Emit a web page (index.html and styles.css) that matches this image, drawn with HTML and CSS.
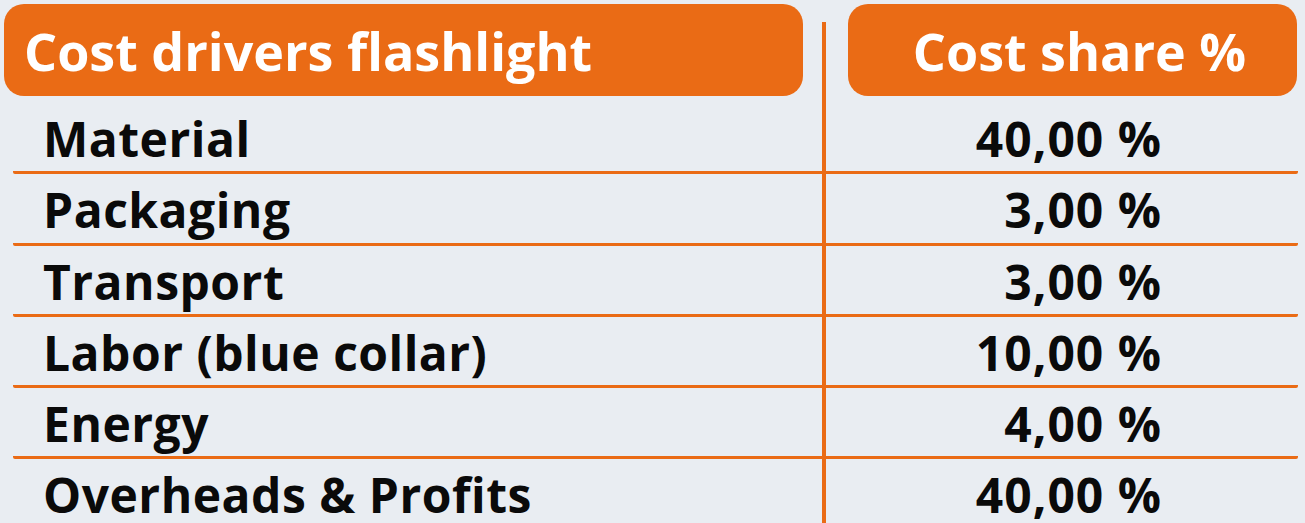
FILE: index.html
```html
<!DOCTYPE html>
<html lang="en">
<head>
<meta charset="utf-8">
<title>Cost drivers flashlight</title>
<link rel="stylesheet" href="styles.css">
</head>
<body>
<div class="table">
  <div class="head">
    <div class="pill pill-left">Cost drivers flashlight</div>
    <div class="divider divider-head"></div>
    <div class="pill pill-right">Cost share %</div>
  </div>
  <div class="rows">
    <div class="row"><div class="label">Material</div><div class="divider"></div><div class="value">40,00 %</div></div>
    <div class="row"><div class="label">Packaging</div><div class="divider"></div><div class="value">3,00 %</div></div>
    <div class="row"><div class="label">Transport</div><div class="divider"></div><div class="value">3,00 %</div></div>
    <div class="row"><div class="label">Labor (blue collar)</div><div class="divider"></div><div class="value">10,00 %</div></div>
    <div class="row"><div class="label">Energy</div><div class="divider"></div><div class="value">4,00 %</div></div>
    <div class="row"><div class="label">Overheads &amp; Profits</div><div class="divider"></div><div class="value">40,00 %</div></div>
  </div>
</div>
</body>
</html>
```
FILE: styles.css
```css
html, body {
  margin: 0;
  padding: 0;
  background: #e9edf2;
  height: 100%;
  overflow: hidden;
}
body {
  font-family: "Open Sans", "Liberation Sans", sans-serif;
  color: #0a0a0a;
}
.table {
  padding: 4px 0 0 4px;
}
.head {
  display: grid;
  grid-template-columns: 799px 45px 449px;
  height: 92px;
}
.pill {
  background: #ea6b15;
  border-radius: 20px;
  color: #ffffff;
  font-weight: 700;
  font-size: 52px;
  display: flex;
  align-items: center;
}
.pill-left {
  padding-left: 20px;
}
.pill-right {
  justify-content: center;
  padding-left: 14px;
}
.divider::before {
  content: "";
  display: block;
  width: 4px;
  height: 100%;
  margin-left: 19px;
  background: #ea6b15;
}
.divider-head {
  padding-top: 18px;
}
.divider-head::before {
  height: calc(100% + 7px);
}
.rows {
  margin-top: 7px;
  margin-left: 9px;
  width: 1285px;
}
.row {
  display: grid;
  grid-template-columns: 790px 45px 450px;
  height: 68.25px;
  border-bottom: 3px solid #ea6b15;
  border-radius: 0 0 2px 2px;
  font-size: 48px;
  font-weight: 700;
  line-height: 68.25px;
}
.row .divider::before {
  height: calc(100% + 3px);
}
.label {
  padding-top: 2px;
  padding-left: 30px;
  white-space: nowrap;
  letter-spacing: 0.5px;
}
.value {
  padding-top: 2px;
  text-align: right;
  padding-right: 136px;
  white-space: nowrap;
  letter-spacing: 1px;
}
```
